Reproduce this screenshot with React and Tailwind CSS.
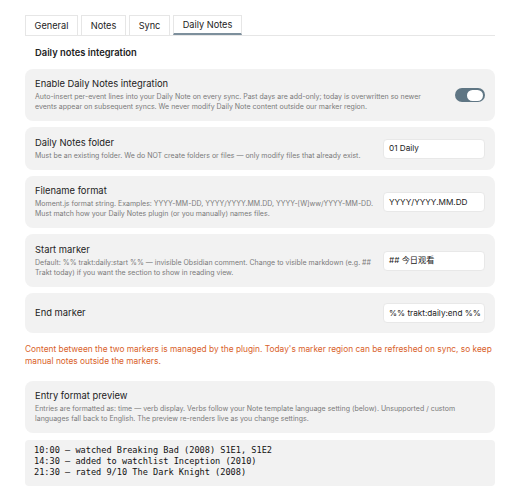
import React from 'react';

const tabs = [
  { label: 'General', w: 'w-[53px]' },
  { label: 'Notes', w: 'w-[45px]' },
  { label: 'Sync', w: 'w-[41px]' },
  { label: 'Daily Notes', w: 'w-[69px]', active: true },
];

function Toggle({ on }) {
  return (
    <div className={`ml-[6px] w-[30px] h-[14px] rounded-full flex items-center px-[2px] ${on ? 'bg-[#5f7684] justify-end' : 'bg-gray-300 justify-start'}`}>
      <div className="w-[16px] h-[11px] rounded-full bg-white" />
    </div>
  );
}

function TextField({ value }) {
  return (
    <div className="w-[102px] h-[20px] shrink-0 bg-white rounded-[4px] border border-[#e8e8e8] flex items-center px-[5px] text-[8.2px] text-[#222] whitespace-nowrap overflow-hidden">
      {value}
    </div>
  );
}

function SettingRow({ title, desc, control, className = '' }) {
  return (
    <div className={`bg-[#f2f2f2] rounded-[8px] px-[10px] flex items-center justify-between ${className}`}>
      <div className="flex-1 pr-[8px]">
        <div className="text-[9.4px] leading-[12px] text-[#222]">{title}</div>
        {desc && (
          <div className="mt-[2px] text-[7px] leading-[10px] text-[#7a7a7a]">{desc}</div>
        )}
      </div>
      {control}
    </div>
  );
}

export default function App() {
  return (
    <div
      className="w-[513px] h-[500px] bg-white pl-[25px] pr-[18px] pt-[15px] overflow-hidden"
      style={{ fontFamily: 'Inter, "Noto Sans CJK SC", sans-serif' }}
    >
      <div className="flex gap-[3px] border-b border-[#e6e6e6]">
        {tabs.map((t) => (
          <div
            key={t.label}
            className={`${t.w} h-[20px] flex items-center justify-center text-[9.2px] text-[#222] border border-b-0 border-[#e6e6e6] ${
              t.active ? 'border-b-2 border-b-[#7d8f9c] -mb-[1px]' : ''
            }`}
          >
            {t.label}
          </div>
        ))}
      </div>

      <div className="pl-[10px] mt-[10px] text-[9.4px] font-semibold text-[#222]">Daily notes integration</div>

      <div className="mt-[9px] flex flex-col gap-[6px]">
        <SettingRow
          className="h-[52px]"
          title="Enable Daily Notes integration"
          desc="Auto-insert per-event lines into your Daily Note on every sync. Past days are add-only; today is overwritten so newer events appear on subsequent syncs. We never modify Daily Note content outside our marker region."
          control={<Toggle on />}
        />
        <SettingRow
          className="h-[43px]"
          title="Daily Notes folder"
          desc="Must be an existing folder. We do NOT create folders or files — only modify files that already exist."
          control={<TextField value="01 Daily" />}
        />
        <SettingRow
          className="h-[52px]"
          title="Filename format"
          desc="Moment.js format string. Examples: YYYY-MM-DD, YYYY/YYYY.MM.DD, YYYY-[W]ww/YYYY-MM-DD. Must match how your Daily Notes plugin (or you manually) names files."
          control={<TextField value="YYYY/YYYY.MM.DD" />}
        />
        <SettingRow
          className="h-[53px]"
          title="Start marker"
          desc="Default: %% trakt:daily:start %% — invisible Obsidian comment. Change to visible markdown (e.g. ## Trakt today) if you want the section to show in reading view."
          control={<TextField value="## 今日观看" />}
        />
        <SettingRow
          className="h-[40px]"
          title="End marker"
          control={<TextField value="%% trakt:daily:end %%" />}
        />
      </div>

      <p className="mt-[10px] text-[8.35px] leading-[12px] text-[#d9622b]">
        Content between the two markers is managed by the plugin. Today's marker region can be refreshed on sync, so keep manual notes outside the markers.
      </p>

      <div className="mt-[14px]">
        <SettingRow
          className="h-[52px]"
          title="Entry format preview"
          desc="Entries are formatted as: time — verb display. Verbs follow your Note template language setting (below). Unsupported / custom languages fall back to English. The preview re-renders live as you change settings."
        />
      </div>

      <pre
        className="mt-[7px] h-[46px] bg-[#f2f2f2] rounded-[4px] px-[9px] pt-[5px] text-[8.6px] leading-[11px] text-[#111]"
        style={{ fontFamily: '"DejaVu Sans Mono", monospace' }}
      >
{`10:00 — watched Breaking Bad (2008) S1E1, S1E2
14:30 — added to watchlist Inception (2010)
21:30 — rated 9/10 The Dark Knight (2008)`}
      </pre>
    </div>
  );
}
